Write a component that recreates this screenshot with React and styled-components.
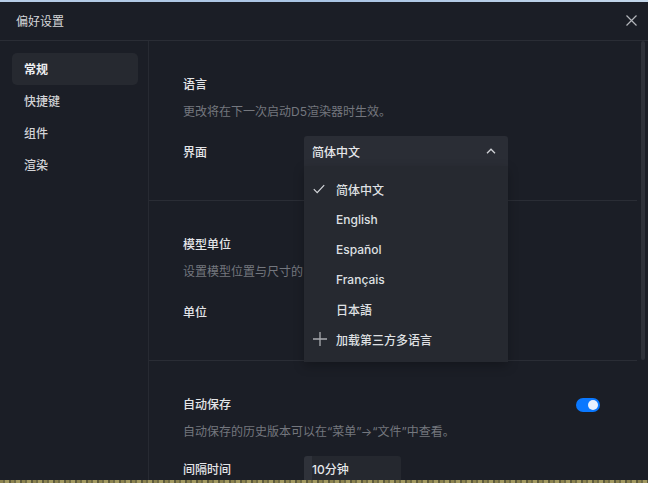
import React, { useState } from 'react'
import styled, { createGlobalStyle } from 'styled-components'

const GlobalStyle = createGlobalStyle`
  html, body {
    margin: 0;
    padding: 0;
    background: #1b1e26;
  }
  body {
    font-family: "Inter", "Noto Sans CJK SC", sans-serif;
    -webkit-font-smoothing: antialiased;
  }
`

const languages = ['简体中文', 'English', 'Español', 'Français', '日本語']
const menu = ['常规', '快捷键', '组件', '渲染']

const CloseIcon = () => (
  <svg width="11" height="11" viewBox="0 0 11 11">
    <path d="M0.5 0.5 L10.5 10.5 M10.5 0.5 L0.5 10.5" stroke="#b4b6bb" strokeWidth="1.2" fill="none" />
  </svg>
)

const ChevronUp = () => (
  <svg width="10" height="6" viewBox="0 0 10 6">
    <path d="M1 5.2 L5 1.2 L9 5.2" stroke="#d0d2d6" strokeWidth="1.3" fill="none" />
  </svg>
)

const CheckIcon = () => (
  <svg width="12" height="10" viewBox="0 0 12 10">
    <path d="M0.8 5.2 L4.2 8.6 L11.2 1.2" stroke="#d6d8dc" strokeWidth="1.2" fill="none" />
  </svg>
)

const PlusIcon = () => (
  <svg width="14" height="14" viewBox="0 0 14 14">
    <path d="M7 0 V14 M0 7 H14" stroke="#a9abb0" strokeWidth="1.3" fill="none" />
  </svg>
)

const App = () => {
  const [lang, setLang] = useState('简体中文')
  const [open, setOpen] = useState(true)
  const [autoSave, setAutoSave] = useState(true)
  const [active, setActive] = useState('常规')

  return (
    <>
      <GlobalStyle />
      <Screen>
        <TopStrip />
        <Dialog>
          <Header>
            <Title>偏好设置</Title>
            <CloseButton><CloseIcon /></CloseButton>
          </Header>
          <Body>
            <Sidebar>
              {menu.map(m => (
                <MenuItem key={m} active={m === active} onClick={() => setActive(m)}>{m}</MenuItem>
              ))}
            </Sidebar>
            <Content>
              <Main>
                <Section>
                  <Heading>语言</Heading>
                  <Desc>更改将在下一次启动D5渲染器时生效。</Desc>
                  <Row>
                    <Label>界面</Label>
                    <SelectWrap>
                      <Select onClick={() => setOpen(!open)}>
                        <span>{lang}</span>
                        <ChevronUp />
                      </Select>
                      {open && (
                        <Options>
                          {languages.map(l => (
                            <Option key={l} onClick={() => setLang(l)}>
                              <IconSlot>{l === lang && <CheckIcon />}</IconSlot>
                              {l}
                            </Option>
                          ))}
                          <Option>
                            <IconSlot><PlusIcon /></IconSlot>
                            加载第三方多语言
                          </Option>
                        </Options>
                      )}
                    </SelectWrap>
                  </Row>
                </Section>
                <Section>
                  <Heading>模型单位</Heading>
                  <Desc>设置模型位置与尺寸的</Desc>
                  <Row>
                    <Label>单位</Label>
                    <Select><span>米</span></Select>
                  </Row>
                </Section>
                <Section last>
                  <HeadRow>
                    <Heading>自动保存</Heading>
                    <Toggle on={autoSave} onClick={() => setAutoSave(!autoSave)} />
                  </HeadRow>
                  <Desc>自动保存的历史版本可以在“菜单”→“文件”中查看。</Desc>
                  <Row>
                    <Label>间隔时间</Label>
                    <Input>10分钟</Input>
                  </Row>
                </Section>
              </Main>
              <Track>
                <Thumb />
              </Track>
            </Content>
          </Body>
        </Dialog>
        <BottomStrip />
      </Screen>
    </>
  )
}

export default App

const Screen = styled.div`
  width: 648px;
  height: 483px;
  display: flex;
  flex-direction: column;
  overflow: hidden;
`
const TopStrip = styled.div`
  height: 2px;
  flex-shrink: 0;
  background: linear-gradient(90deg, #b7cde6, #a9c4e4 50%, #c3d6ea);
`
const BottomStrip = styled.div`
  height: 3px;
  flex-shrink: 0;
  background: repeating-linear-gradient(90deg, #8c8350 0 3px, #6e6a45 3px 5px, #a39a62 5px 9px, #5d5a3c 9px 11px);
`
const Dialog = styled.div`
  flex: 1;
  min-height: 0;
  display: flex;
  flex-direction: column;
  background: #1b1e26;
`
const Header = styled.div`
  height: 39px;
  flex-shrink: 0;
  display: flex;
  align-items: center;
  justify-content: space-between;
  padding: 0 11px 2px 16px;
  box-sizing: border-box;
  border-bottom: 1px solid #2a2d35;
`
const Title = styled.div`
  color: #d6d7da;
  font-size: 12px;
`
const CloseButton = styled.div`
  display: flex;
  cursor: pointer;
`
const Body = styled.div`
  flex: 1;
  min-height: 0;
  display: flex;
`
const Sidebar = styled.div`
  width: 149px;
  flex-shrink: 0;
  box-sizing: border-box;
  padding: 12px 10px 0 12px;
  border-right: 1px solid #272a32;
`
const MenuItem = styled.div`
  height: 32px;
  line-height: 33px;
  padding-left: 12px;
  border-radius: 5px;
  font-size: 12px;
  color: ${p => p.active ? '#eeeff1' : '#d2d3d6'};
  font-weight: ${p => p.active ? 600 : 500};
  background: ${p => p.active ? '#262930' : 'transparent'};
  cursor: pointer;
`
const Content = styled.div`
  flex: 1;
  display: flex;
  overflow: hidden;
`
const Main = styled.div`
  width: 488px;
  flex-shrink: 0;
`
const Section = styled.div`
  height: 160px;
  box-sizing: border-box;
  padding: 36px 37px 0 34px;
  border-bottom: ${p => p.last ? 'none' : '1px solid #2a2d35'};
`
const HeadRow = styled.div`
  display: flex;
  align-items: center;
  justify-content: space-between;
`
const Heading = styled.div`
  font-size: 12px;
  line-height: 16px;
  color: #e4e5e8;
  font-weight: 500;
`
const Desc = styled.div`
  margin-top: 10px;
  font-size: 12px;
  line-height: 18px;
  color: #74777e;
`
const Row = styled.div`
  margin-top: 15px;
  display: flex;
  align-items: center;
`
const Label = styled.div`
  width: 121px;
  font-size: 12px;
  font-weight: 500;
  color: #e4e5e8;
`
const SelectWrap = styled.div`
  position: relative;
`
const Select = styled.div`
  width: 204px;
  height: 30px;
  box-sizing: border-box;
  padding: 0 12px 0 8px;
  display: flex;
  align-items: center;
  justify-content: space-between;
  background: #2a2d35;
  border-radius: 3px 3px 0 0;
  font-size: 12px;
  font-weight: 500;
  color: #e6e7ea;
  cursor: pointer;
`
const Options = styled.div`
  position: absolute;
  top: 30px;
  left: 0;
  width: 204px;
  padding: 8px 0;
  background: #262930;
  z-index: 2;
  box-shadow: 0 4px 10px rgba(0, 0, 0, 0.25);
`
const Option = styled.div`
  height: 30px;
  display: flex;
  align-items: center;
  padding-left: 9px;
  font-size: 12px;
  font-weight: 500;
  color: #dfe0e3;
  cursor: pointer;
`
const IconSlot = styled.span`
  width: 23px;
  display: flex;
  align-items: center;
`
const Toggle = styled.div`
  width: 24px;
  height: 14px;
  border-radius: 7px;
  background: ${p => p.on ? '#0a78ff' : '#3a3d45'};
  position: relative;
  cursor: pointer;
  &::after {
    content: '';
    position: absolute;
    top: 2px;
    left: ${p => p.on ? '12px' : '2px'};
    width: 10px;
    height: 10px;
    border-radius: 50%;
    background: #e9f1ff;
  }
`
const Input = styled.div`
  width: 97px;
  height: 24px;
  box-sizing: border-box;
  display: flex;
  align-items: center;
  background: #25282f;
  border-left: 8px solid #2f323a;
  border-radius: 3px 3px 0 0;
  font-size: 12px;
  font-weight: 500;
  color: #e6e7ea;
`
const Track = styled.div`
  flex: 1;
  padding-left: 4px;
`
const Thumb = styled.div`
  width: 4px;
  height: 319px;
  border-radius: 2px;
  background: #2e3139;
`
